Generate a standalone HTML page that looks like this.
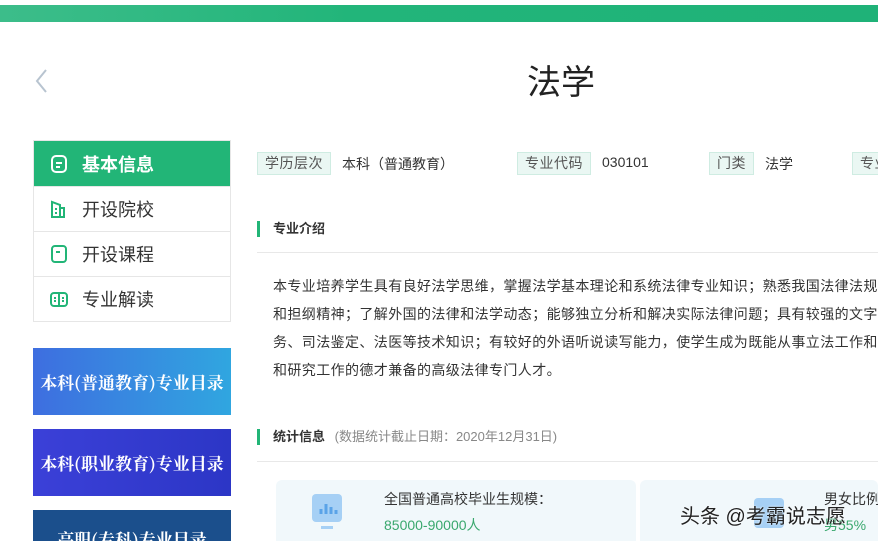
<!DOCTYPE html>
<html><head><meta charset="utf-8"><style>
*{margin:0;padding:0;box-sizing:border-box}
html,body{width:878px;height:541px;overflow:hidden}
body{background:#fff;font-family:"Liberation Sans","Noto Sans CJK SC",sans-serif;color:#333;position:relative}
.abs{position:absolute;white-space:nowrap}
.bar{position:absolute;left:0;top:5px;width:878px;height:17px;background:linear-gradient(90deg,#3cbd8a,#22b57a 40%,#1fb278)}
.nav{position:absolute;left:33px;top:140px;width:198px;border:1px solid #e6e6e6}
.nav div{height:45px;border-top:1px solid #e6e6e6;display:flex;align-items:center;padding-left:16px;font-size:18px;color:#333}
.nav div:first-child{border-top:none;background:#22b577;color:#fff;font-weight:bold;height:45px}
.nav svg{margin-right:14px}
.ban{position:absolute;left:33px;width:198px;height:67px;color:#fff;font-family:"Noto Serif CJK SC",serif;font-weight:bold;font-size:17px;display:flex;align-items:center;justify-content:center;white-space:nowrap;overflow:hidden}
.tag{position:absolute;top:152px;height:23px;background:#eaf7f3;border:1px solid #cfece2;font-size:14px;color:#555;padding:0 7px;line-height:21px;white-space:nowrap;letter-spacing:0.5px}
.val{position:absolute;top:154px;font-size:14px;color:#333;white-space:nowrap}
.hd{position:absolute;left:257px;border-left:3px solid #22b577;padding-left:13px;font-size:13px;font-weight:bold;height:16px;line-height:16px;color:#333;white-space:nowrap}
.line{position:absolute;left:257px;width:621px;height:1px;background:#e8e8e8}
.p{position:absolute;left:273px;font-size:14px;color:#333;white-space:nowrap;letter-spacing:0.4px}
</style></head><body>
<div class="bar"></div>
<svg class="abs" style="left:33px;top:68px" width="16" height="26"><path d="M13 2 L4 13 L13 24" stroke="#b8c4d0" stroke-width="2" fill="none"/></svg>
<div class="abs" style="left:527px;top:55px;font-size:34px;color:#222">法学</div>

<div class="nav">
<div><svg width="18" height="20" viewBox="0 0 18 20"><rect x="2" y="2" width="14" height="16" rx="4" fill="none" stroke="#fff" stroke-width="2"/><path d="M6 9h6M6 13h4" stroke="#fff" stroke-width="2"/></svg>基本信息</div>
<div><svg width="18" height="20" viewBox="0 0 18 20"><path d="M2 18V3l8 3v12zM10 9h4v9h-4" fill="none" stroke="#22b577" stroke-width="2"/><path d="M5 10h2M5 14h2" stroke="#22b577" stroke-width="2"/></svg>开设院校</div>
<div><svg width="18" height="20" viewBox="0 0 18 20"><rect x="2" y="2" width="14" height="16" rx="3" fill="none" stroke="#22b577" stroke-width="2"/><path d="M6 8h4" stroke="#22b577" stroke-width="2"/></svg>开设课程</div>
<div><svg width="18" height="20" viewBox="0 0 18 20"><rect x="1" y="4" width="16" height="13" rx="3" fill="none" stroke="#22b577" stroke-width="2"/><path d="M9 4v13M4 9h2M12 9h2M4 12h2M12 12h2" stroke="#22b577" stroke-width="2"/></svg>专业解读</div>
</div>

<div class="ban" style="top:348px;background:linear-gradient(90deg,#3e6ee0,#30a6e0)">本科(普通教育)专业目录</div>
<div class="ban" style="top:429px;background:linear-gradient(90deg,#3b40d8,#2c36c6)">本科(职业教育)专业目录</div>
<div class="ban" style="top:510px;height:31px;background:#1b4f8c;align-items:flex-start;padding-top:16px">高职(专科)专业目录</div>

<div class="tag" style="left:257px">学历层次</div><div class="val" style="left:342px">本科（普通教育）</div>
<div class="tag" style="left:517px">专业代码</div><div class="val" style="left:602px">030101</div>
<div class="tag" style="left:709px">门类</div><div class="val" style="left:765px">法学</div>
<div class="tag" style="left:852px">专业类</div>

<div class="hd" style="top:221px">专业介绍</div>
<div class="line" style="top:252px"></div>
<div class="p" style="top:276px">本专业培养学生具有良好法学思维，掌握法学基本理论和系统法律专业知识；熟悉我国法律法规</div>
<div class="p" style="top:304px">和担纲精神；了解外国的法律和法学动态；能够独立分析和解决实际法律问题；具有较强的文字</div>
<div class="p" style="top:332px">务、司法鉴定、法医等技术知识；有较好的外语听说读写能力，使学生成为既能从事立法工作和</div>
<div class="p" style="top:360px">和研究工作的德才兼备的高级法律专门人才。</div>

<div class="hd" style="top:429px">统计信息 <span style="font-weight:normal;color:#888;margin-left:6px">(数据统计截止日期：2020年12月31日)</span></div>
<div class="line" style="top:461px"></div>

<div class="abs" style="left:276px;top:480px;width:360px;height:70px;background:#f1f8fb;border-radius:6px"></div>
<svg class="abs" style="left:310px;top:492px" width="40" height="40"><rect x="2" y="2" width="30" height="28" rx="4" fill="#a6d0f5"/><path d="M11 22v-5M16 22v-10M21 22v-7M26 22v-4" stroke="#5aa3e8" stroke-width="3"/><rect x="11" y="34" width="12" height="3" fill="#a6d0f5"/></svg>
<div class="abs" style="left:384px;top:489px;font-size:14px;color:#333">全国普通高校毕业生规模：</div>
<div class="abs" style="left:384px;top:515px;font-size:14px;color:#3aa86e">85000-90000人</div>

<div class="abs" style="left:640px;top:480px;width:238px;height:70px;background:#f1f8fb;border-radius:6px"></div>
<svg class="abs" style="left:752px;top:492px" width="36" height="40"><rect x="2" y="6" width="30" height="30" rx="4" fill="#a6d0f5"/></svg>
<div class="abs" style="left:824px;top:489px;font-size:14px;color:#333">男女比例</div>
<div class="abs" style="left:824px;top:515px;font-size:14px;color:#3aa86e">男55%</div>
<div class="abs" style="left:680px;top:500px;font-size:20px;color:#222;text-shadow:0 0 2px #fff">头条 @考霸说志愿</div>
</body></html>
